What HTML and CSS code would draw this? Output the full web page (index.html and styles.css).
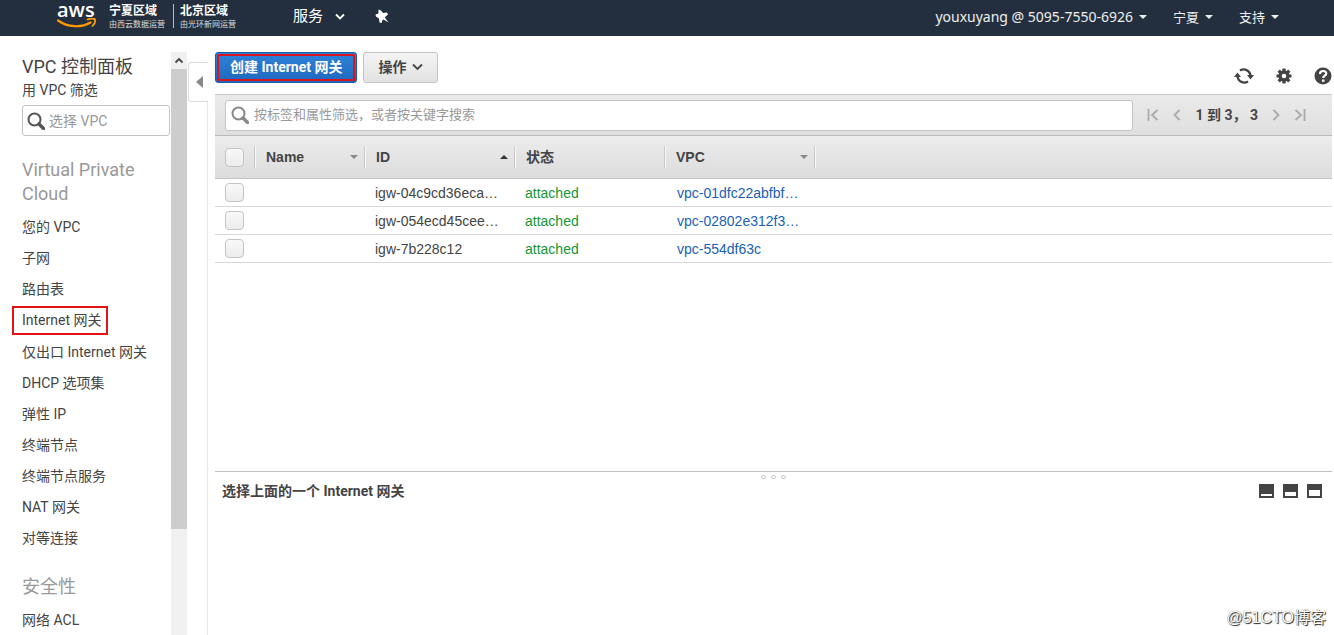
FILE: index.html
```html
<!DOCTYPE html>
<html lang="zh-CN">
<head>
<meta charset="utf-8">
<title>VPC 控制面板</title>
<link rel="stylesheet" href="styles.css">
</head>
<body>
<header class="topbar">
  <div class="brand">
    <div class="aws"><span class="aws-word">aws</span>
      <svg class="aws-smile" viewBox="0 0 40 11" width="40" height="11"><path d="M1 2.500C11 9.500 24 10 33.500 4.500" fill="none" stroke="#f90" stroke-width="2.200" stroke-linecap="round"/><path d="M30.500 1.500C33.500.4 37 .5 38 1.500C38.600 3 37.300 6 35.500 8" fill="none" stroke="#f90" stroke-width="1.800" stroke-linecap="round"/></svg>
    </div>
    <div class="region"><b>宁夏区域</b><small>由西云数据运营</small></div>
    <div class="region region-second"><b>北京区域</b><small>由光环新网运营</small></div>
  </div>
  <button class="nav-button services">服务
    <svg viewBox="0 0 10 7" width="10" height="7"><path d="M1 1.500l4 4 4-4" fill="none" stroke="currentColor" stroke-width="1.800"/></svg>
  </button>
  <button class="nav-button pin" aria-label="固定">
    <svg viewBox="0 0 14 14" width="14" height="14"><path d="M3.500 .5L6 1.500l2 2.500 4-.5 1 2-3 2.500.5 1.500 3 4-5-3-1 .5-1 3-2-.5-.5-4L1 7.500.5 5.500 3.500 4.500z" fill="#fff"/></svg>
  </button>
  <nav class="account">
    <button class="nav-button user">youxuyang @ 5095-7550-6926 <i class="caret"></i></button>
    <button class="nav-button">宁夏 <i class="caret"></i></button>
    <button class="nav-button">支持 <i class="caret"></i></button>
  </nav>
</header>
<div class="layout">
  <aside class="sidebar">
    <h1>VPC 控制面板</h1>
    <label for="vpc-filter">用 VPC 筛选</label>
    <div class="search-box filter">
      <svg viewBox="0 0 18 18" width="18" height="18"><circle cx="7.500" cy="7.500" r="6" fill="none" stroke="currentColor" stroke-width="2"/><path d="M12 12l4.500 4.500" stroke="currentColor" stroke-width="3.400" stroke-linecap="round"/></svg>
      <input id="vpc-filter" type="text" placeholder="选择 VPC">
    </div>
    <h2>Virtual Private Cloud</h2>
    <ul>
      <li><a href="#">您的 VPC</a></li>
      <li><a href="#">子网</a></li>
      <li><a href="#">路由表</a></li>
      <li class="current"><a href="#">Internet 网关</a></li>
      <li><a href="#">仅出口 Internet 网关</a></li>
      <li><a href="#">DHCP 选项集</a></li>
      <li><a href="#">弹性 IP</a></li>
      <li><a href="#">终端节点</a></li>
      <li><a href="#">终端节点服务</a></li>
      <li><a href="#">NAT 网关</a></li>
      <li><a href="#">对等连接</a></li>
    </ul>
    <h2>安全性</h2>
    <ul>
      <li><a href="#">网络 ACL</a></li>
    </ul>
  </aside>
  <div class="scrollbar">
    <svg viewBox="0 0 16 17" width="16" height="17"><path d="M4.500 10.500L8 7l3.500 3.500" fill="none" stroke="#444" stroke-width="1.800"/></svg>
    <div class="thumb"></div>
  </div>
  <div class="gutter">
    <button class="collapse" aria-label="折叠"><svg viewBox="0 0 7 12" width="7" height="12"><path d="M7 0v12L0 6z" fill="#888"/></svg></button>
    <div class="gutter-line"></div>
  </div>
  <main class="content">
    <div class="actions">
      <button class="button primary">创建 Internet 网关</button>
      <button class="button">操作 <svg viewBox="0 0 11 8" width="11" height="8"><path d="M1 1.500l4.500 4.500L10 1.500" fill="none" stroke="currentColor" stroke-width="1.800"/></svg></button>
      <div class="tools">
        <button class="icon" aria-label="刷新"><svg viewBox="0 0 20 18" width="20" height="18"><g fill="none" stroke="#444" stroke-width="2.400"><path d="M6 3.500C10 1 16 3 16.500 9"/><path d="M14 14.500C10 17 4 15 3.500 9"/></g><path d="M13 8h7l-3.500 4.500zM0 10h7L3.500 5.500z" fill="#444"/></svg></button>
        <button class="icon" aria-label="设置"><svg viewBox="0 0 16 16" width="16" height="16"><circle cx="8" cy="8" r="4" fill="none" stroke="#444" stroke-width="3.400"/><path d="M8 .5v4M8 11.500v4M.5 8h4M11.500 8h4M2.700 2.700l2.800 2.800M10.500 10.500l2.800 2.800M13.300 2.700l-2.800 2.800M5.500 10.500l-2.800 2.800" stroke="#444" stroke-width="3.200"/></svg></button>
        <button class="icon" aria-label="帮助"><svg viewBox="0 0 18 18" width="18" height="18"><circle cx="9" cy="9" r="8.500" fill="#444"/><path d="M6 7c0-4 6.300-3.800 6.300-.5C12.300 8.800 9.200 8.600 9.200 11" fill="none" stroke="#fff" stroke-width="2.200"/><path d="M8 12.500h2.500v2.300H8z" fill="#fff"/></svg></button>
      </div>
    </div>
    <div class="query">
      <div class="search-box">
        <svg viewBox="0 0 18 18" width="18" height="18"><circle cx="7.500" cy="7.500" r="6" fill="none" stroke="currentColor" stroke-width="2"/><path d="M12 12l4.500 4.500" stroke="currentColor" stroke-width="3.400" stroke-linecap="round"/></svg>
        <input type="text" aria-label="筛选" placeholder="按标签和属性筛选，或者按关键字搜索">
      </div>
      <div class="pager">
        <button class="icon" aria-label="首页"><svg viewBox="0 0 12 12" width="12" height="12"><path d="M1.500 0v12M10.500 1L5 6l5.500 5" /></svg></button>
        <button class="icon" aria-label="上一页"><svg viewBox="0 0 8 12" width="8" height="12"><path d="M6.500 1L1.500 6l5 5"/></svg></button>
        <span class="range">1 到 3， 3</span>
        <button class="icon" aria-label="下一页"><svg viewBox="0 0 8 12" width="8" height="12"><path d="M1.500 1l5 5-5 5"/></svg></button>
        <button class="icon" aria-label="末页"><svg viewBox="0 0 12 12" width="12" height="12"><path d="M10.500 0v12M1.500 1L7 6l-5.500 5"/></svg></button>
      </div>
    </div>
    <div class="grid">
      <table>
        <colgroup><col class="c-check"><col class="c-name"><col class="c-wide"><col class="c-wide"><col class="c-wide"><col></colgroup>
        <thead>
          <tr>
            <th><input type="checkbox" aria-label="全选"></th>
            <th><div class="head">Name<i class="caret muted"></i></div></th>
            <th><div class="head">ID<i class="caret up"></i></div></th>
            <th><div class="head">状态</div></th>
            <th><div class="head">VPC<i class="caret muted"></i></div></th>
            <th><div class="head"></div></th>
          </tr>
        </thead>
        <tbody>
          <tr><td><input type="checkbox" aria-label="选择 igw-04c9cd36eca"></td><td></td><td>igw-04c9cd36eca…</td><td class="ok">attached</td><td class="link"><a href="#">vpc-01dfc22abfbf…</a></td><td></td></tr>
          <tr><td><input type="checkbox" aria-label="选择 igw-054ecd45cee"></td><td></td><td>igw-054ecd45cee…</td><td class="ok">attached</td><td class="link"><a href="#">vpc-02802e312f3…</a></td><td></td></tr>
          <tr><td><input type="checkbox" aria-label="选择 igw-7b228c12"></td><td></td><td>igw-7b228c12</td><td class="ok">attached</td><td class="link"><a href="#">vpc-554df63c</a></td><td></td></tr>
        </tbody>
      </table>
    </div>
    <section class="details">
      <div class="grip"><i></i><i></i><i></i></div>
      <div class="details-head">
        <h3>选择上面的一个 Internet 网关</h3>
        <button class="pane pane-low" aria-label="小面板"></button>
        <button class="pane pane-mid" aria-label="中面板"></button>
        <button class="pane pane-high" aria-label="大面板"></button>
      </div>
    </section>
  </main>
</div>
<div class="watermark">@51CTO博客</div>
</body>
</html>
```
FILE: styles.css
```css
* { box-sizing: border-box; }
body {
  margin: 0;
  height: 100vh;
  display: flex;
  flex-direction: column;
  overflow: hidden;
  background: #fff;
  color: #444;
  font: 14px/20px Roboto, "Noto Sans CJK SC", sans-serif;
}
button { font: inherit; color: inherit; border: 0; padding: 0; background: none; }
input { font: inherit; color: inherit; margin: 0; }
svg { display: block; flex: none; }
a { color: inherit; text-decoration: none; }
h1, h2, h3, ul { margin: 0; padding: 0; font-weight: 400; list-style: none; }

.topbar {
  flex: none;
  height: 36px;
  display: flex;
  align-items: center;
  padding: 0 55px 0 57px;
  background: #232f3e;
  color: #fff;
}
.brand { display: flex; height: 36px; align-items: flex-start; }
.aws { width: 40px; margin-right: 12px; }
.aws-word { display: block; font: 600 20px/20px "Open Sans", sans-serif; }
.aws-smile { margin-top: -2px; }
.region { display: flex; flex-direction: column; padding-top: 4px; white-space: nowrap; }
.region b { font-size: 12px; line-height: 14px; }
.region small { font-size: 8px; line-height: 14px; color: #ddd; }
.region-second { margin: 4px 0 0 8px; padding: 0 0 0 6px; border-left: 1px solid #b5bac0; height: 24px; }
.nav-button { display: flex; align-items: center; }
.services { margin-left: 57px; gap: 12px; font-size: 15px; padding-bottom: 4px; }
.pin { margin-left: 30px; padding-bottom: 4px; }
.account {
  margin-left: auto;
  display: flex;
  gap: 26px;
  font: 13px/20px "Noto Sans", "Noto Sans CJK SC", sans-serif;
  color: #eee;
}
.account .nav-button { gap: 6px; padding-bottom: 2px; }
.account .user { font-size: 14px; }
.caret { flex: none; width: 0; height: 0; border: 4px solid transparent; border-top-color: currentColor; border-bottom: 0; }
.caret.muted { color: #888; }
.caret.up { border: 4px solid transparent; border-bottom-color: #333; border-top: 0; }

.layout { flex: 1; min-height: 0; display: flex; padding-top: 16px; }
.sidebar { flex: none; width: 171px; padding: 4px 1px 0 22px; overflow: hidden; }
.sidebar h1 { font-size: 18px; line-height: 22px; }
.sidebar label { display: block; line-height: 24px; }
.sidebar h2 { font-size: 18px; line-height: 24px; color: #999; padding: 22px 0 6px; }
.sidebar ul + h2 { padding-top: 21px; }
.sidebar li { line-height: 31px; white-space: nowrap; }
.sidebar .current { margin: 1px 0 2px -10px; line-height: 25px; }
.current a { display: inline-block; padding: 0 4px 0 8px; border: 2px solid #e31414; vertical-align: top; }
.search-box {
  display: flex;
  align-items: center;
  height: 31px;
  padding: 0 5px;
  gap: 5px;
  border: 1px solid #c4c4c4;
  border-radius: 3px;
  background: #fff;
  color: #888;
}
.search-box input { flex: 1; min-width: 0; border: 0; outline: 0; padding: 0; background: none; }
.search-box input::placeholder { color: #999; }
.filter { padding: 0 4px; gap: 4px; margin-top: 3px; }
.filter svg { color: #555; }

.scrollbar { flex: none; width: 16px; background: #f0f0f0; }
.thumb { height: 460px; background: #cdcdcd; }
.gutter { flex: none; width: 20px; margin: 10px 7px 0 1px; display: flex; flex-direction: column; }
.collapse {
  height: 40px;
  display: flex;
  align-items: center;
  padding-left: 7px;
  border: 1px solid #ddd;
  border-right: 0;
  border-radius: 3px 0 0 3px;
}
.gutter-line { flex: 1; border-right: 1px solid #e8e8e8; }

.content { flex: 1; min-width: 0; display: flex; flex-direction: column; margin-right: 2px; }
.actions { flex: none; display: flex; gap: 6px; height: 42px; align-items: flex-start; }
.button {
  height: 31px;
  display: flex;
  align-items: center;
  gap: 6px;
  padding: 0 14px 2px;
  border: 1px solid #c4c4c4;
  border-radius: 3px;
  background: linear-gradient(#f4f4f4, #e2e2e2);
  font-weight: 700;
}
.primary {
  border-color: #1a5ba8;
  background: linear-gradient(#2f83da, #1f68bf);
  color: #fff;
  outline: 2px solid #d8141c;
  outline-offset: -4px;
}
.tools { margin: 15px 0 0 auto; display: flex; align-items: center; gap: 22px; }
.query {
  flex: none;
  display: flex;
  align-items: center;
  height: 42px;
  padding: 0 26px 0 10px;
  border-top: 1px solid #c8c8c8;
  border-bottom: 1px solid #bbb;
  background: linear-gradient(#eaeaea, #dfdfdf);
}
.query .search-box { flex: 1; }
.query input { font-size: 13px; }
.pager { display: flex; align-items: center; gap: 14px; margin-left: 14px; }
.pager path { fill: none; stroke: #aaa; stroke-width: 1.800; }
.range { font-weight: 700; }

.grid { flex: 1; min-height: 0; overflow: hidden; font-family: "Liberation Sans", "Noto Sans CJK SC", sans-serif; }
table { width: 100%; table-layout: fixed; border-collapse: separate; border-spacing: 0; }
.c-check { width: 39px; }
.c-name { width: 110px; }
.c-wide { width: 150px; }
th { height: 43px; padding: 0; text-align: left; background: linear-gradient(#ececec, #dcdcdc); border-bottom: 1px solid #c4c4c4; }
.head {
  height: 22px;
  display: flex;
  align-items: center;
  justify-content: space-between;
  padding: 0 6px 0 11px;
  border-left: 1px solid #c8c8c8;
  box-shadow: inset 1px 0 #f8f8f8;
}
td { height: 28px; padding: 0 0 0 11px; border-bottom: 1px solid #d8d8d8; white-space: nowrap; }
th:first-child, td:first-child { padding-left: 10px; }
.link { padding-left: 13px; }
td a { color: #1a5fb4; }
.ok { color: #149637; }
input[type="checkbox"] {
  appearance: none;
  display: block;
  width: 19px;
  height: 19px;
  border: 1px solid #c4c4c4;
  border-radius: 4px;
  background: linear-gradient(#f8f8f8, #ececec);
}

.details { flex: none; height: 164px; border-top: 1px solid #c0c0c0; }
.grip { display: flex; justify-content: center; gap: 5px; padding-top: 3px; height: 9px; }
.grip i { width: 5px; height: 4px; border: 1px solid #ccc; border-radius: 2px; }
.details-head { display: flex; align-items: center; gap: 9px; padding: 0 10px 0 7px; }
.details h3 { flex: 1; font-size: 14px; font-weight: 700; }
.pane { width: 15px; height: 14px; border: 2px solid #444; }
.pane-low { border-top-width: 10px; }
.pane-mid { border-top-width: 8px; }
.pane-high { border-top-width: 6px; }
.watermark {
  position: absolute;
  right: 8px;
  bottom: 6px;
  font: 16px/22px "Liberation Sans", "Noto Sans CJK SC", sans-serif;
  color: #fff;
  text-shadow: 1px 1px 1px #222, 0 0 1px #555;
}
```
